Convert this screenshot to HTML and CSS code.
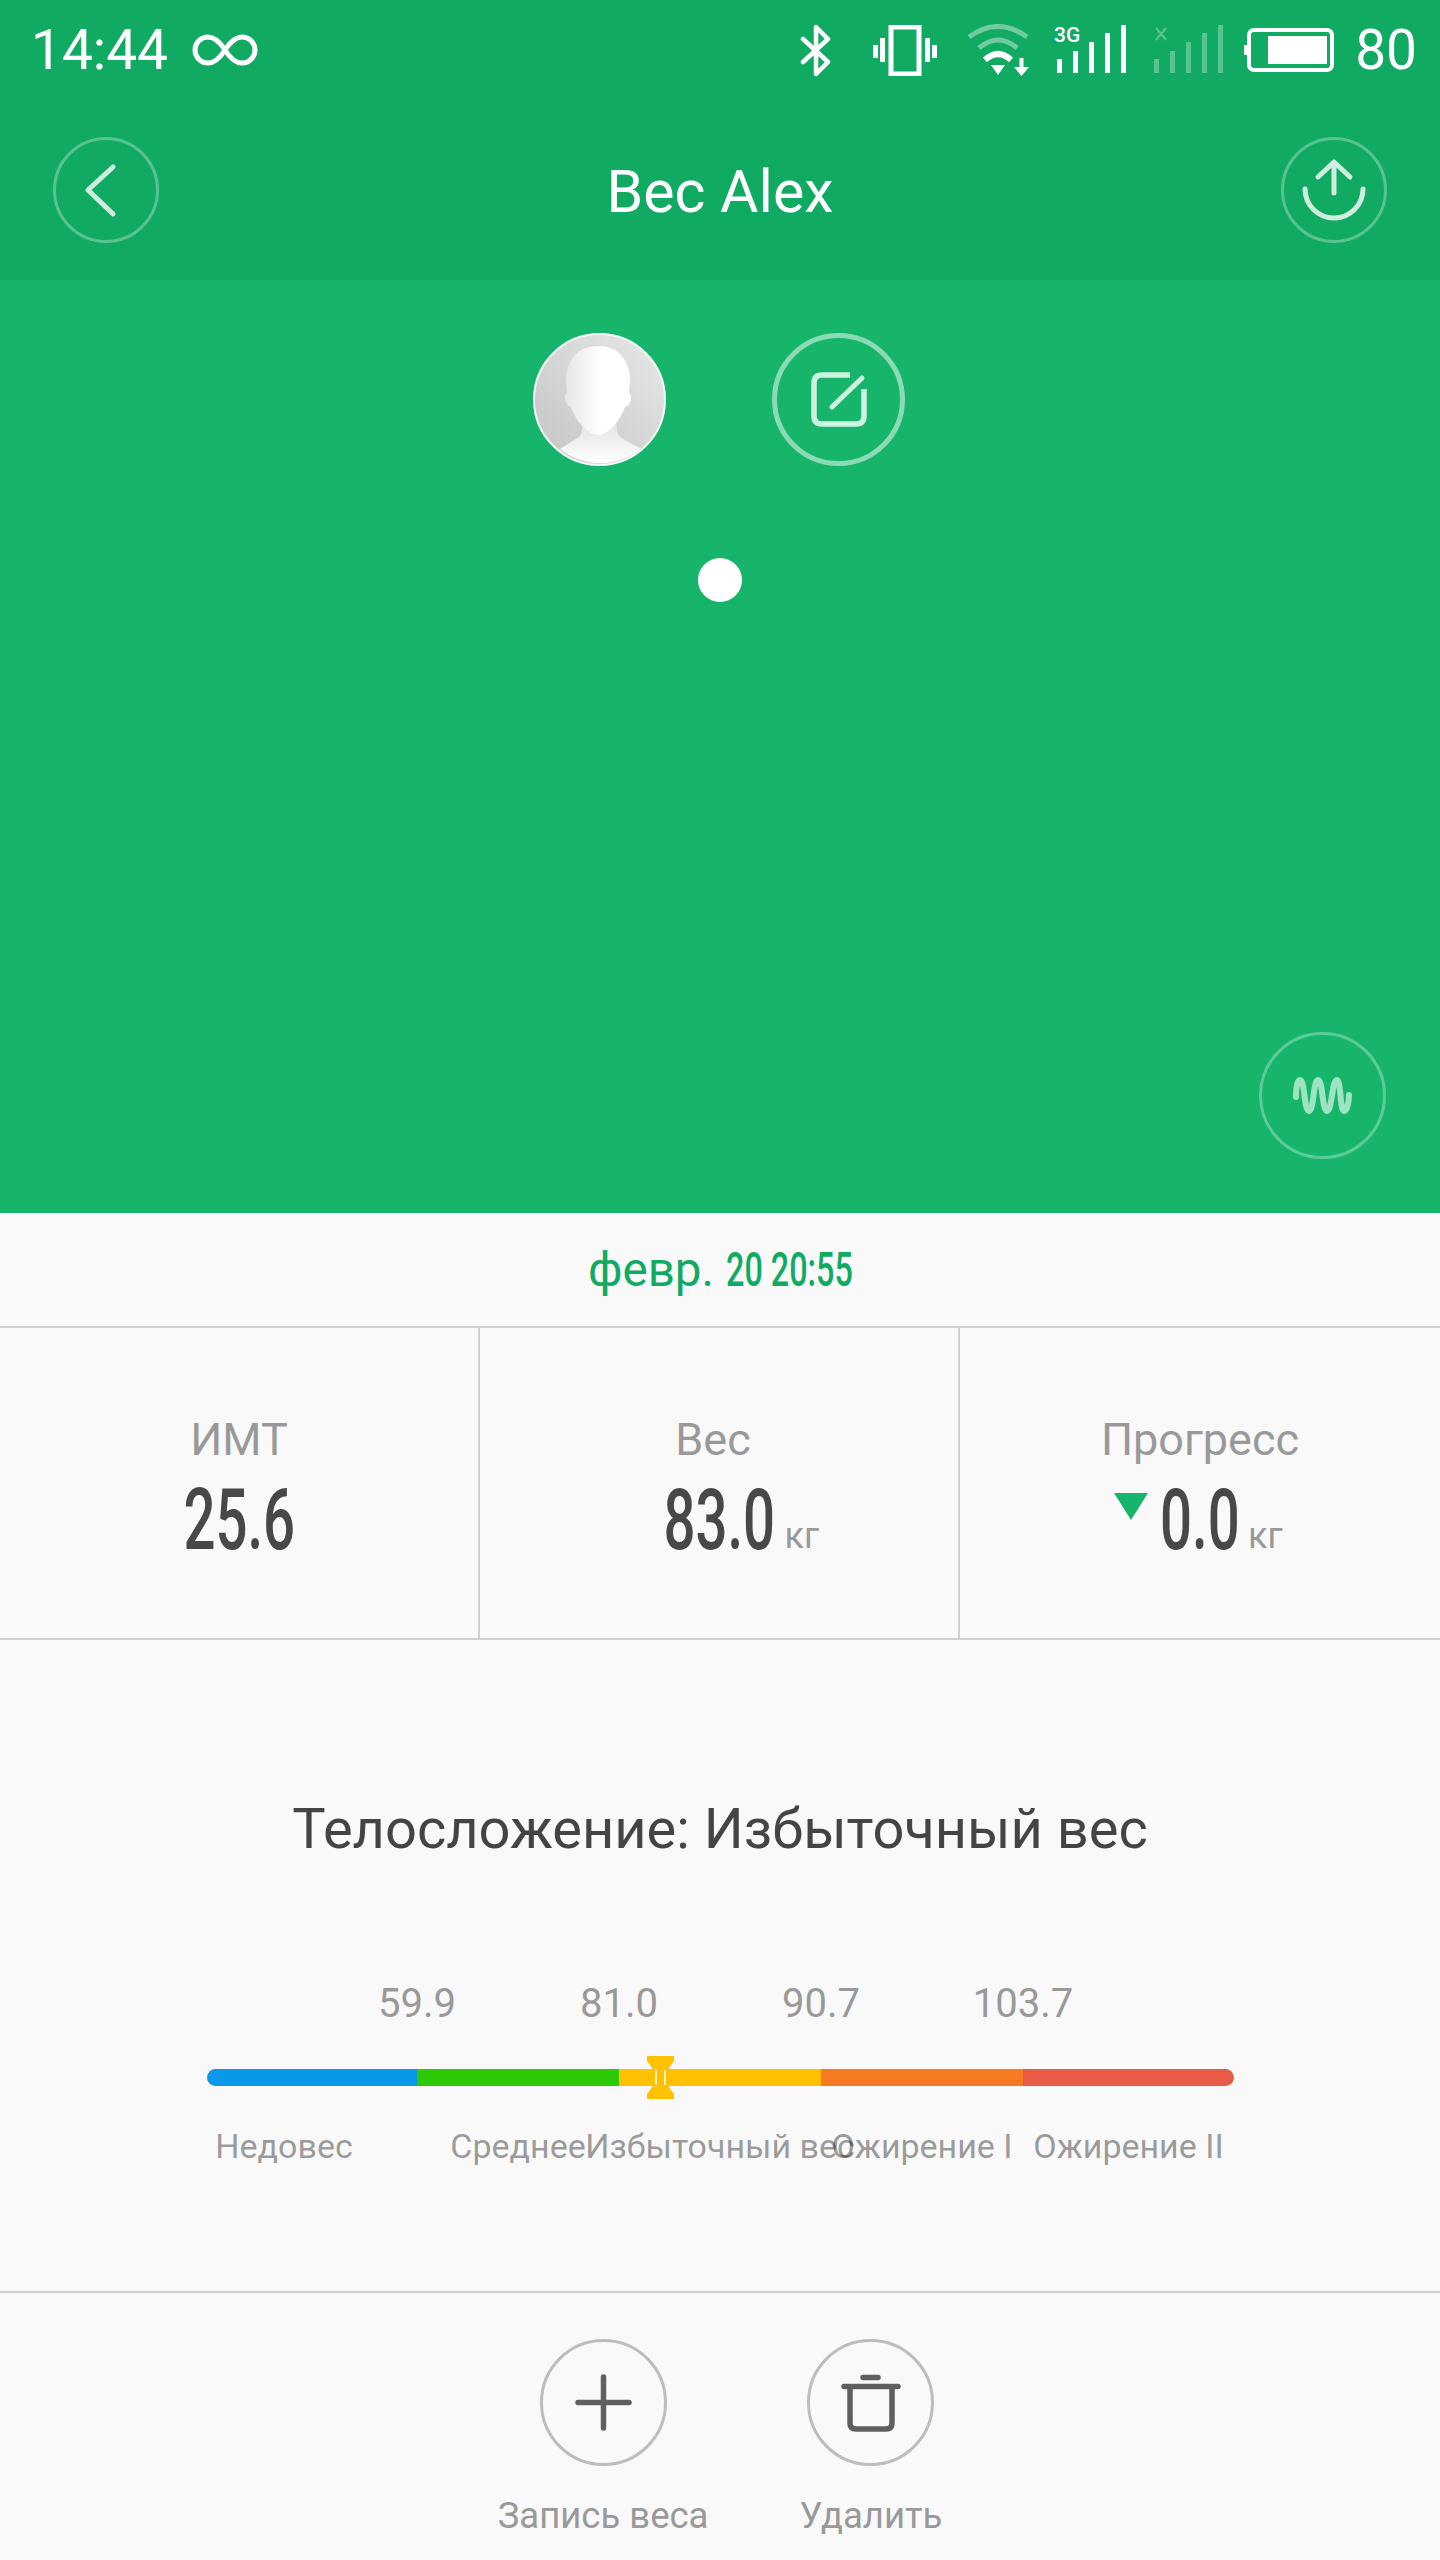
FILE: index.html
```html
<!DOCTYPE html>
<html lang="ru">
<head>
<meta charset="utf-8">
<title>Вес Alex</title>
<link rel="stylesheet" href="styles.css">
</head>
<body>
<header class="top">
  <div class="status">
    <span class="status-text">14:44</span>
    <svg class="ic-inf" viewBox="0 0 66 32"><path d="M33 16C28 8 23 3 16 3A13 13 0 0 0 16 29C23 29 28 24 33 16C38 8 43 3 50 3A13 13 0 0 1 50 29C43 29 38 24 33 16Z"/></svg>
    <svg class="ic-bt" viewBox="0 0 32 53"><path d="M3 15L28 38L16 50V3L28 15L3 38"/></svg>
    <svg class="ic-vib" viewBox="0 0 64 51"><rect x="18" y="2" width="28" height="47"/><path d="M2.500 20V33M9.500 13V37M54.500 13V37M61.500 20V33"/></svg>
    <svg class="ic-wifi" viewBox="0 0 63 52"><path class="dim" d="M3 13Q32 -8 61 13"/><path class="dim" d="M13 24Q32 8 51 24"/><path d="M19 36Q32 24 45 36"/><polygon class="solid" points="25,41 39,41 32,51"/><path class="thin" d="M55.500 34V46"/><polygon class="solid" points="48,43 63,43 55.500,52"/></svg>
    <svg class="ic-sig" viewBox="0 0 72 50"><text class="sig-label" x="0" y="17">3G</text><path d="M5.500 34V48M21.500 26V48M37.500 17V48M53.500 8V48M69.500 0V48"/></svg>
    <svg class="ic-sig ic-sig-off" viewBox="0 0 72 50"><path class="x" d="M3 3L13 15M13 3L3 15"/><path d="M3.500 34V48M19.500 26V48M35.500 17V48M51.500 8V48M67.500 0V48"/></svg>
    <svg class="ic-bat" viewBox="0 0 90 44"><rect x="5" y="2" width="83" height="40" rx="5"/><rect class="solid" x="24" y="8" width="59" height="28"/><rect class="solid" x="0" y="17" width="3" height="10"/></svg>
    <span class="status-text status-pct">80</span>
  </div>
  <nav class="nav">
    <svg class="round" viewBox="0 0 106 106"><circle class="ring" cx="53" cy="53" r="51.500"/><path class="glyph" d="M60 30L35 53L60 77"/></svg>
    <h1 class="title">Вес Alex</h1>
    <svg class="round" viewBox="0 0 106 106"><circle class="ring" cx="53" cy="53" r="51.500"/><path class="glyph" d="M53 56V26M37 40L53 25L69 40M24 52A29 29 0 0 0 82 52"/></svg>
  </nav>
</header>

<section class="hero">
  <div class="hero-row">
    <svg class="big" viewBox="0 0 133 133">
      <defs>
        <linearGradient id="av" x1="1" y1="0" x2="0" y2="1"><stop offset="0" stop-color="#e8e8e8"/><stop offset="1" stop-color="#c4c4c4"/></linearGradient>
        <linearGradient id="face" x1="0" y1="0" x2="1" y2="0"><stop offset="0" stop-color="#e6e6e6"/><stop offset=".55" stop-color="#ffffff"/></linearGradient>
        <linearGradient id="chest" x1="0" y1="0" x2="0" y2="1"><stop offset="0" stop-color="#dcdcdc"/><stop offset="1" stop-color="#ffffff"/></linearGradient>
      </defs>
      <circle cx="66.500" cy="66.500" r="65.500" fill="url(#av)" stroke="#f4faf7" stroke-width="2"/>
      <path fill="url(#chest)" d="M27 116L46 104C50 100 50 92 48 78H85C83 92 83 100 87 104L108 116A65 65 0 0 1 27 116Z"/>
      <path fill="url(#face)" d="M65 13C46 13 35 25 33 44C33 50 34 55 34 60C30 62 32 72 38 74C42 86 54 102 65 102C76 102 88 86 92 74C98 72 100 62 96 60C96 55 97 50 97 44C95 25 84 13 65 13Z"/>
    </svg>
    <svg class="big" viewBox="0 0 133 133">
      <circle class="ring-strong" cx="66.500" cy="66.500" r="64"/>
      <path class="glyph-edit" d="M78 42H50Q42 42 42 50V83Q42 91 50 91H84Q92 91 92 83V56"/>
      <path class="glyph-edit thin-edit" d="M60 74L90 45"/>
    </svg>
  </div>
  <div class="dot"></div>
  <svg class="wave-btn" viewBox="0 0 127 127"><circle class="ring" cx="63.500" cy="63.500" r="62"/><path class="glyph-wave" d="M37 65C37 52 39 48 41 48C46 48 45 79 50 79C55 79 54 48 59 48C64 48 63 79 68 79C73 79 73 48 78 48C82 48 81 79 85 79C88 79 90 70 90 63"/></svg>
</section>

<div class="date"><span class="date-word">февр.</span> <span class="date-num">20 20:55</span></div>

<section class="stats">
  <div class="stat">
    <div class="stat-label">ИМТ</div>
    <div class="value value-bmi"><span class="num">25.6</span></div>
  </div>
  <div class="stat">
    <div class="stat-label stat-label-off">Вес</div>
    <div class="value value-weight"><span class="num">83.0</span><span class="unit">кг</span></div>
  </div>
  <div class="stat">
    <div class="stat-label">Прогресс</div>
    <div class="value value-diff"><span class="arrow"></span><span class="num">0.0</span><span class="unit">кг</span></div>
  </div>
</section>

<section class="body">
  <h2 class="shape">Телосложение: Избыточный вес</h2>
  <div class="scale">
    <div class="grid ticks">
      <span class="tick">59.9</span><span class="tick">81.0</span><span class="tick">90.7</span><span class="tick">103.7</span>
    </div>
    <div class="track">
      <div class="grid bar">
        <span class="seg seg-blue"></span><span class="seg seg-green"></span><span class="seg seg-yellow"></span><span class="seg seg-orange"></span><span class="seg seg-red"></span>
      </div>
      <svg class="marker" viewBox="0 0 27 43"><polygon fill="#ffc000" points="0,0 27,0 27,5 19,16 19,27 27,38 27,43 0,43 0,38 8,27 8,16 0,5"/><path fill="none" stroke="#fff" stroke-width="1.500" d="M9 14V29M18 14V29"/></svg>
    </div>
    <div class="grid names">
      <span class="name name-first">Недовес</span><span class="name">Среднее</span><span class="name">Избыточный вес</span><span class="name">Ожирение I</span><span class="name">Ожирение II</span>
    </div>
  </div>
</section>

<footer class="actions">
  <div class="action">
    <svg class="act-ic" viewBox="0 0 127 127"><circle cx="63.500" cy="63.500" r="62"/><path class="act-glyph" d="M38 63.500H89M63.500 38V89"/></svg>
    <span class="act-label">Запись веса</span>
  </div>
  <div class="action">
    <svg class="act-ic" viewBox="0 0 127 127"><circle cx="63.500" cy="63.500" r="62"/><path class="act-glyph" d="M37 47.500H91M56 38.500H71M43 47.500V84Q43 90 49 90H79Q85 90 85 84V47.500"/></svg>
    <span class="act-label">Удалить</span>
  </div>
</footer>
</body>
</html>
```

FILE: styles.css
```css
* { box-sizing: border-box; }
html, body { margin: 0; padding: 0; }
body {
  width: 1440px;
  height: 2560px;
  overflow: hidden;
  background: #f9f9f9;
  font-family: Roboto, "Liberation Sans", sans-serif;
  color: #444;
}
svg { display: block; flex: none; fill: none; }

/* Header */
.top { height: 280px; background: #11aa62; color: #fff; }
.status { height: 100px; padding: 0 23px 0 31px; display: flex; align-items: center; }
.status svg { stroke: #fff; }
.status-text { font-size: 55px; font-weight: 400; line-height: 60px; }
.status .solid { fill: #fff; stroke: none; }
.ic-inf { width: 66px; height: 32px; margin-left: 24px; stroke-width: 5; }
.ic-bt { width: 32px; height: 53px; margin-left: auto; stroke-width: 4.500; stroke-linecap: round; stroke-linejoin: round; }
.ic-vib { width: 64px; height: 51px; margin-left: 41px; stroke-width: 5; }
.ic-wifi { width: 63px; height: 52px; margin-left: 29px; stroke-width: 6; }
.ic-wifi .dim { stroke-opacity: .4; stroke-width: 5; }
.ic-wifi .thin { stroke-width: 4; }
.ic-sig { width: 72px; height: 50px; margin-left: 25px; stroke-width: 5; }
.ic-sig text { fill: #fff; stroke: none; font-size: 21px; font-weight: 500; font-family: Roboto, sans-serif; }
.ic-sig-off { opacity: .3; margin-left: 27px; }
.ic-sig-off .x { stroke-width: 2; }
.ic-bat { width: 90px; height: 44px; margin-left: 19px; stroke-width: 4; }
.status-pct { margin-left: 21px; }

.nav { height: 180px; padding: 0 53px; display: flex; align-items: center; justify-content: space-between; }
.round { width: 106px; height: 106px; }
.ring { stroke: rgba(255,255,255,.3); stroke-width: 3; }
.glyph { stroke: rgba(255,255,255,.8); stroke-width: 5; stroke-linecap: round; stroke-linejoin: round; }
.title { margin: 0; font-size: 59px; font-weight: 400; line-height: 64px; padding-top: 4px; }

/* Hero */
.hero {
  height: 933px;
  background: #17b56c;
  padding: 53px 54px 54px;
  display: flex;
  flex-direction: column;
}
.hero-row { display: flex; justify-content: center; gap: 106px; margin-left: -2px; }
.big { width: 133px; height: 133px; }
.ring-strong { stroke: rgba(255,255,255,.5); stroke-width: 5; }
.glyph-edit { stroke: #cdf2e0; stroke-width: 5.500; }
.thin-edit { stroke-width: 5; stroke-linecap: round; }
.dot { width: 44px; height: 44px; margin: 92px auto 0; border-radius: 50%; background: #fff; }
.wave-btn { width: 127px; height: 127px; margin-top: auto; align-self: flex-end; }
.glyph-wave { stroke: #9de5c0; stroke-width: 6; stroke-linecap: round; }

/* Date */
.date {
  height: 115px;
  border-bottom: 2px solid #cfcfcf;
  display: flex;
  justify-content: center;
  align-items: center;
  color: #11aa62;
  font-size: 47.500px;
  gap: 12px;
}
.date-num { display: inline-block; width: 126px; font-size: 49px; font-weight: 500; white-space: nowrap; transform: scaleX(.66); transform-origin: left center; }

/* Stats */
.stats { height: 312px; border-bottom: 2px solid #cfcfcf; display: grid; grid-template-columns: 480px 480px 480px; }
.stat { border-right: 2px solid #cfcfcf; display: flex; flex-direction: column; align-items: center; padding-top: 85px; }
.stat:last-child { border-right: 0; }
.stat-label { font-size: 45px; line-height: 54px; color: #999; font-weight: 400; }
.stat-label-off { margin-right: 12px; }
.value { position: relative; display: flex; justify-content: center; height: 84px; margin-top: 11px; }
.value-bmi { width: 109px; }
.value-weight { width: 111px; }
.value-diff { width: 76px; }
.num { flex: none; font-size: 86px; line-height: 84px; font-weight: 500; color: #484848; transform: scaleX(.655); }
.unit { position: absolute; left: calc(100% + 10px); bottom: 8px; font-size: 36px; line-height: 36px; color: #999; }
.arrow {
  position: absolute;
  right: calc(100% + 14px);
  top: 15px;
  width: 0;
  height: 0;
  border-left: 17.500px solid transparent;
  border-right: 17.500px solid transparent;
  border-top: 27px solid #17b56c;
}

/* Body */
.body { height: 653px; padding-top: 159px; border-bottom: 2px solid #cfcfcf; }
.shape { margin: 0; font-size: 56px; line-height: 60px; font-weight: 400; text-align: center; color: #444; }
.scale { width: 1027px; margin: 0 0 0 207px; padding-top: 121px; }
.grid { display: grid; grid-template-columns: 210px 202px 202px 202px 211px; }
.ticks { height: 48px; }
.tick { justify-self: end; transform: translateX(50%); font-size: 40px; line-height: 48px; font-weight: 400; color: #999; }
.track { position: relative; margin-top: 41px; height: 17px; }
.bar { height: 17px; border-radius: 9px; overflow: hidden; }
.seg-blue { background: #0a98e8; }
.seg-green { background: #2dc905; }
.seg-yellow { background: #ffc000; }
.seg-orange { background: #f67a22; }
.seg-red { background: #e85c47; }
.marker { position: absolute; left: 42.8%; top: -13px; width: 27px; height: 43px; }
.names { margin-top: 38px; }
.name { justify-self: center; white-space: nowrap; font-size: 34px; line-height: 44px; font-weight: 400; color: rgba(0,0,0,.4); }
.name-first { margin-right: 56px; }

/* Actions */
.actions { display: flex; justify-content: center; gap: 91px; padding-top: 46px; }
.action { display: flex; flex-direction: column; align-items: center; }
.act-ic { width: 127px; height: 127px; stroke: #bdbdbd; stroke-width: 3; }
.act-glyph { stroke: #5f5f5f; stroke-width: 5.500; stroke-linecap: round; stroke-linejoin: round; }
.act-label { margin-top: 28px; font-size: 36.500px; line-height: 44px; color: #999; }
```
